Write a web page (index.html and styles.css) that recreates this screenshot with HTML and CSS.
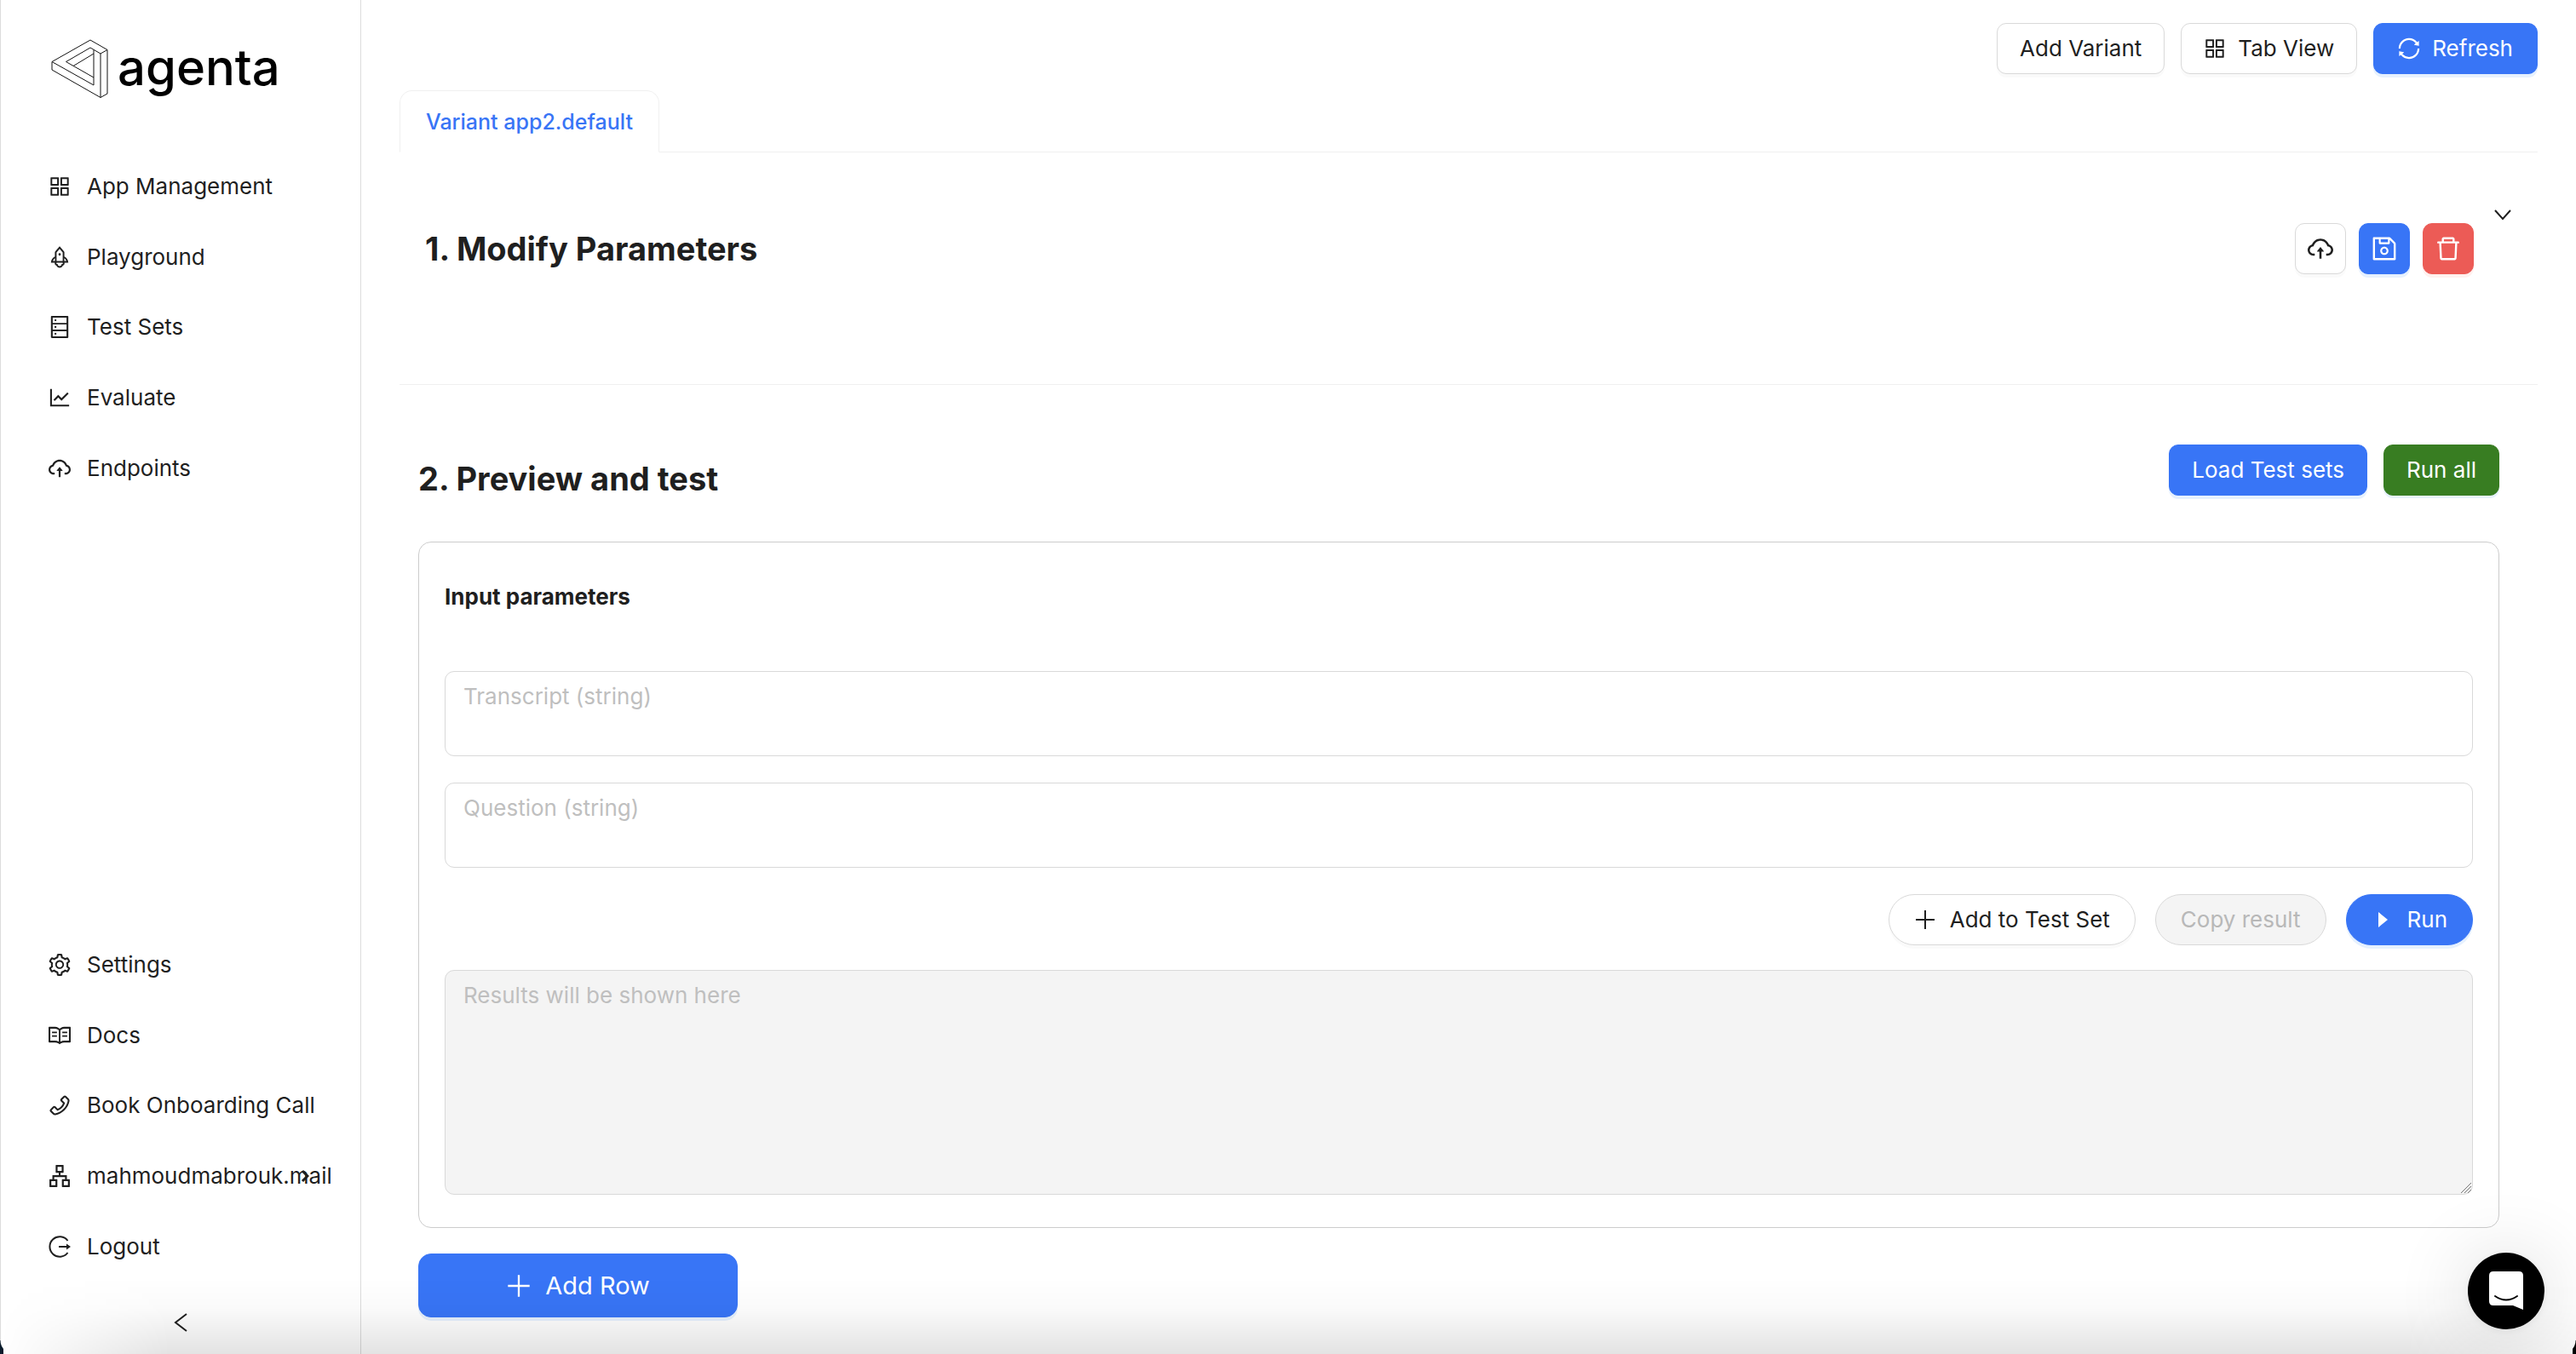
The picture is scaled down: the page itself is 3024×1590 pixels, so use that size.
FILE: index.html
```html
<!DOCTYPE html>
<html lang="en">
<head>
<meta charset="utf-8">
<title>Agenta Playground</title>
<link rel="stylesheet" href="styles.css">
</head>
<body>
<svg class="sprite" aria-hidden="true">
  <symbol id="appstore" viewBox="64 64 896 896"><path d="M464 144H160c-8.8 0-16 7.2-16 16v304c0 8.8 7.2 16 16 16h304c8.8 0 16-7.2 16-16V160c0-8.8-7.2-16-16-16zm-52 268H212V212h200v200zm452-268H560c-8.8 0-16 7.2-16 16v304c0 8.8 7.2 16 16 16h304c8.8 0 16-7.2 16-16V160c0-8.8-7.2-16-16-16zm-52 268H612V212h200v200zM464 544H160c-8.8 0-16 7.2-16 16v304c0 8.8 7.2 16 16 16h304c8.8 0 16-7.2 16-16V560c0-8.8-7.2-16-16-16zm-52 268H212V612h200v200zm452-268H560c-8.8 0-16 7.2-16 16v304c0 8.8 7.2 16 16 16h304c8.8 0 16-7.2 16-16V560c0-8.8-7.2-16-16-16zm-52 268H612V612h200v200z"/></symbol>
  <symbol id="rocket" viewBox="64 64 896 896"><path d="M864 736c0-111.6-65.4-208-160-252.9V317.3c0-15.1-5.3-29.7-15.1-41.2L536.5 95.4C530.1 87.8 521 84 512 84s-18.1 3.8-24.5 11.4L335.1 276.1a63.97 63.97 0 00-15.1 41.2v165.8C225.4 528 160 624.4 160 736h156.5c-2.3 7.2-3.5 15-3.5 23.8 0 22.1 7.6 43.7 21.4 60.8a97.2 97.2 0 0043.1 30.6c23.1 54 75.6 88.8 134.5 88.8 29.1 0 57.3-8.6 81.4-24.8 23.6-15.8 41.9-37.9 53-64a97 97 0 0043.1-30.5 97.52 97.52 0 0021.4-60.8c0-8.4-1.1-16.4-3.1-23.8H864zM762.3 621.4c9.4 14.6 17 30.3 22.5 46.6H700V558.7a211.6 211.6 0 0162.3 62.7zM388 483.1V318.8l124-147 124 147V668H388V483.1zM239.2 668c5.5-16.3 13.1-32 22.5-46.6 16.3-25.2 37.5-46.5 62.3-62.7V668h-84.8zm388.9 116.2c-5.2 3-11.2 4.2-17.1 3.4l-19.5-2.4-2.8 19.4c-5.4 37.9-38.4 66.5-76.7 66.5-38.3 0-71.3-28.6-76.7-66.5l-2.8-19.5-19.5 2.5a27.7 27.7 0 01-17.1-3.5c-8.7-5-14.1-14.3-14.1-24.4 0-10.6 5.9-19.4 14.6-23.8h231.3c8.8 4.5 14.6 13.3 14.6 23.8-.1 10.2-5.5 19.6-14.2 24.5zM464 400a48 48 0 1096 0 48 48 0 10-96 0z"/></symbol>
  <symbol id="database" viewBox="64 64 896 896"><path d="M832 64H192c-17.7 0-32 14.3-32 32v832c0 17.7 14.3 32 32 32h640c17.7 0 32-14.3 32-32V96c0-17.7-14.3-32-32-32zm-600 72h560v208H232V136zm560 480H232V408h560v208zm0 272H232V680h560v208zM304 240a40 40 0 1080 0 40 40 0 10-80 0zm0 272a40 40 0 1080 0 40 40 0 10-80 0zm0 272a40 40 0 1080 0 40 40 0 10-80 0z"/></symbol>
  <symbol id="chart" viewBox="64 64 896 896"><path d="M888 792H200V168c0-4.400-3.600-8-8-8h-56c-4.400 0-8 3.600-8 8v688c0 4.400 3.600 8 8 8h752c4.400 0 8-3.600 8-8v-56c0-4.400-3.600-8-8-8zM305.800 637.700c3.100 3.100 8.100 3.100 11.300 0l138.300-137.600L583 628.500c3.100 3.100 8.200 3.100 11.300 0l275.400-275.300c3.100-3.100 3.100-8.200 0-11.300l-39.600-39.600a8.030 8.030 0 00-11.300 0l-230 229.900L461.400 404a8.030 8.030 0 00-11.300 0L266.300 586.700a8.030 8.030 0 000 11.300l39.500 39.700z"/></symbol>
  <symbol id="cloud" viewBox="64 64 896 896"><path d="M518.3 459a8 8 0 00-12.600 0l-112 141.700a7.980 7.980 0 006.300 12.900h73.900V856c0 4.400 3.600 8 8 8h60c4.400 0 8-3.600 8-8V613.700H624c6.700 0 10.400-7.700 6.300-12.900L518.300 459z"/><path d="M811.4 366.7C765.6 245.9 648.9 160 512.2 160S258.8 245.8 213 366.6C127.3 389.1 64 467.2 64 560c0 110.5 89.5 200 199.9 200H304c4.4 0 8-3.6 8-8v-60c0-4.4-3.6-8-8-8h-40.1c-33.7 0-65.4-13.4-89-37.7-23.5-24.2-36-56.8-34.9-90.6.9-26.4 9.9-51.2 26.2-72.1 16.7-21.3 40.1-36.8 66.1-43.7l37.9-9.9 13.9-36.6c8.6-22.8 20.6-44.1 35.7-63.4a245.6 245.6 0 0152.4-49.9c41.1-28.9 89.5-44.2 140-44.2s98.9 15.3 140 44.2c19.9 14 37.5 30.8 52.4 49.9 15.1 19.3 27.1 40.7 35.700 63.400l13.800 36.500 37.800 10C846.100 454.500 884 503.800 884 560c0 33.100-12.900 64.300-36.300 87.700a123.070 123.070 0 01-87.600 36.300H720c-4.400 0-8 3.600-8 8v60c0 4.400 3.600 8 8 8h40.100C870.500 760 960 670.500 960 560c0-92.700-63.100-170.700-148.600-193.300z"/></symbol>
  <symbol id="setting" viewBox="64 64 896 896"><path d="M924.8 625.7l-65.5-56c3.1-19 4.7-38.4 4.7-57.8s-1.6-38.8-4.7-57.8l65.5-56a32.03 32.03 0 009.3-35.2l-.9-2.6a443.74 443.74 0 00-79.7-137.9l-1.8-2.1a32.12 32.12 0 00-35.1-9.5l-81.3 28.9c-30-24.6-63.5-44-99.7-57.6l-15.7-85a32.05 32.05 0 00-25.8-25.7l-2.7-.5c-52.1-9.4-106.9-9.4-159 0l-2.7.5a32.05 32.05 0 00-25.8 25.7l-15.8 85.4a351.86 351.86 0 00-99 57.4l-81.9-29.1a32 32 0 00-35.1 9.5l-1.8 2.1a446.02 446.02 0 00-79.7 137.9l-.9 2.6c-4.5 12.5-.8 26.5 9.3 35.2l66.3 56.6c-3.1 18.8-4.6 38-4.6 57.1 0 19.2 1.5 38.4 4.6 57.1L99 625.5a32.03 32.03 0 00-9.3 35.2l.9 2.6c18.1 50.4 44.9 96.9 79.7 137.9l1.8 2.1a32.12 32.12 0 0035.1 9.5l81.9-29.1c29.8 24.5 63.1 43.9 99 57.4l15.8 85.4a32.05 32.05 0 0025.8 25.7l2.7.5a449.4 449.4 0 00159 0l2.7-.5a32.05 32.05 0 0025.8-25.7l15.7-85a350 350 0 0099.7-57.6l81.3 28.9a32 32 0 0035.1-9.5l1.8-2.1c34.8-41.1 61.6-87.5 79.7-137.9l.9-2.6c4.5-12.3.8-26.3-9.3-35zM788.3 465.9c2.5 15.1 3.8 30.6 3.8 46.1s-1.3 31-3.8 46.1l-6.6 40.1 74.7 63.9a370.03 370.03 0 01-42.6 73.6L721 702.8l-31.4 25.8c-23.9 19.6-50.5 35-79.3 45.8l-38.1 14.3-17.9 97a377.5 377.5 0 01-85 0l-17.9-97.2-37.8-14.5c-28.5-10.8-55-26.2-78.7-45.7l-31.4-25.9-93.4 33.2c-17-22.9-31.2-47.6-42.6-73.6l75.5-64.5-6.5-40c-2.4-14.9-3.7-30.3-3.7-45.5 0-15.3 1.2-30.6 3.7-45.5l6.5-40-75.5-64.5c11.3-26.1 25.6-50.7 42.6-73.6l93.4 33.2 31.4-25.9c23.7-19.5 50.2-34.9 78.7-45.7l37.9-14.3 17.9-97.2c28.1-3.2 56.8-3.2 85 0l17.9 97 38.1 14.3c28.700 10.800 55.400 26.200 79.300 45.800l31.400 25.800 92.800-32.900c17 22.900 31.200 47.600 42.600 73.600L781.800 426l6.500 39.900zM512 326c-97.200 0-176 78.800-176 176s78.800 176 176 176 176-78.800 176-176-78.800-176-176-176zm79.200 255.200A111.600 111.600 0 01512 614c-29.900 0-58-11.700-79.200-32.800A111.600 111.600 0 01400 502c0-29.900 11.700-58 32.800-79.200C454 401.600 482.100 390 512 390c29.900 0 58 11.600 79.200 32.800A111.600 111.600 0 01624 502c0 29.900-11.700 58-32.800 79.200z"/></symbol>
  <symbol id="read" viewBox="64 64 896 896"><path d="M928 161H699.2c-49.1 0-97.1 14.1-138.4 40.7L512 233l-48.8-31.3A255.2 255.2 0 00324.8 161H96c-17.7 0-32 14.3-32 32v568c0 17.7 14.3 32 32 32h228.8c49.1 0 97.1 14.1 138.4 40.7l44.4 28.6c1.3.8 2.8 1.3 4.3 1.3s3-.4 4.3-1.3l44.4-28.6C602 807.1 650.1 793 699.2 793H928c17.700 0 32-14.300 32-32V193c0-17.700-14.300-32-32-32zM324.800 721H136V233h188.800c35.400 0 69.800 10.100 99.500 29.200l48.800 31.300 6.900 4.500v462c-47.600-25.600-100.800-39-155.200-39zm563.200 0H699.200c-54.400 0-107.600 13.400-155.200 39V298l6.900-4.500 48.800-31.300c29.700-19.100 64.100-29.200 99.500-29.200H888v488zM204 361h200v60H204zM620 361h200v60H620zM204 501h200v60H204zM620 501h200v60H620z"/></symbol>
  <symbol id="phone" viewBox="64 64 896 896"><path d="M877.1 238.7L770.6 132.3c-13-13-30.4-20.3-48.8-20.3s-35.8 7.2-48.8 20.3L558.3 246.8c-13 13-20.3 30.5-20.3 48.9 0 18.5 7.2 35.8 20.3 48.9l89.6 89.7a405.46 405.46 0 01-86.4 127.3c-36.7 36.9-79.6 66-127.2 86.6l-89.6-89.7c-13-13-30.4-20.3-48.8-20.3a68.2 68.2 0 00-48.8 20.3L132.3 673c-13 13-20.3 30.5-20.3 48.9 0 18.5 7.2 35.8 20.3 48.9l106.4 106.400c22.200 22.200 52.800 34.900 84.200 34.900 6.500 0 12.800-.5 19.200-1.600 132.400-21.800 263.800-92.300 369.900-198.300C818 606 888.400 474.600 910.400 342.100c6.300-37.600-6.300-76.300-33.300-103.400zm-37.600 91.500c-19.500 117.900-82.900 235.500-178.400 331s-213 158.900-330.900 178.400c-14.800 2.500-30-2.500-40.800-13.200L184.900 721.900 295.700 611l119.800 120 .9.9 21.600-8a481.290 481.290 0 00285.700-285.800l8-21.600-120.800-120.700 110.800-110.900 104.500 104.500c10.800 10.800 15.800 26 13.300 40.800z"/></symbol>
  <symbol id="apartment" viewBox="64 64 896 896"><path d="M908 640H804V488c0-4.400-3.600-8-8-8H548v-96h108c8.800 0 16-7.200 16-16V80c0-8.800-7.200-16-16-16H368c-8.800 0-16 7.200-16 16v288c0 8.800 7.200 16 16 16h108v96H228c-4.400 0-8 3.600-8 8v152H116c-8.800 0-16 7.200-16 16v288c0 8.800 7.200 16 16 16h288c8.800 0 16-7.200 16-16V656c0-8.800-7.200-16-16-16H292v-88h440v88H620c-8.800 0-16 7.200-16 16v288c0 8.800 7.200 16 16 16h288c8.800 0 16-7.200 16-16V656c0-8.800-7.200-16-16-16zm-564 76v168H176V716h168zm84-408V140h168v168H428zm420 576H680V716h168v168z"/></symbol>
  <symbol id="logout" viewBox="0 0 26 26"><path d="M22.500 6A11.700 11.700 0 1022.500 20" fill="none" stroke="currentColor" stroke-width="2"/><path d="M12 12h9V9.500l5 3.500-5 3.500V14h-9z"/></symbol>
  <symbol id="sync" viewBox="64 64 896 896"><path d="M168 504.2c1-43.7 10-86.1 26.900-126 17.300-41 42.100-77.700 73.700-109.400S337 212.300 378 195c42.400-17.900 87.400-27 133.900-27s91.500 9.100 133.800 27A341.500 341.500 0 01755 268.800c9.900 9.900 19.200 20.400 27.800 31.400l-60.200 47a8 8 0 003 14.100l175.700 43c5 1.200 9.900-2.600 9.900-7.700l.8-180.900c0-6.700-7.700-10.500-12.900-6.300l-56.400 44.100C765.800 155.100 646.200 92 511.800 92 282.700 92 96.300 275.600 92 503.800a8 8 0 008 8.200h60c4.400 0 7.900-3.500 8-7.800zm756 7.800h-60c-4.400 0-7.900 3.500-8 7.800-1 43.700-10 86.100-26.900 126-17.300 41-42.100 77.800-73.700 109.400A342.450 342.450 0 01512.100 856a342.240 342.240 0 01-243.200-100.800c-9.900-9.900-19.200-20.400-27.800-31.400l60.200-47a8 8 0 00-3-14.100l-175.700-43c-5-1.200-9.900 2.600-9.900 7.700l-.7 181c0 6.700 7.700 10.500 12.900 6.300l56.400-44.100C258.200 868.900 377.800 932 512.200 932c229.200 0 415.500-183.700 419.800-411.800a8 8 0 00-8-8.200z"/></symbol>
  <symbol id="save" viewBox="64 64 896 896"><path d="M893.3 293.3L730.7 130.7c-7.5-7.5-16.7-13-26.7-16V112H144c-17.7 0-32 14.3-32 32v736c0 17.7 14.3 32 32 32h736c17.7 0 32-14.3 32-32V338.5c0-17-6.700-33.200-18.700-45.200zM384 184h256v104H384V184zm456 656H184V184h136v136c0 17.700 14.300 32 32 32h320c17.700 0 32-14.300 32-32V205.800l136 136V840zM512 442c-79.500 0-144 64.500-144 144s64.500 144 144 144 144-64.500 144-144-64.500-144-144-144zm0 224c-44.200 0-80-35.800-80-80s35.800-80 80-80 80 35.800 80 80-35.800 80-80 80z"/></symbol>
  <symbol id="delete" viewBox="64 64 896 896"><path d="M360 184h304v72h72v-80c0-35.300-28.700-64-64-64H352c-35.300 0-64 28.700-64 64v80h72v-72zm504 72H160c-17.700 0-32 14.300-32 32v32c0 4.400 3.600 8 8 8h60.400l24.700 523c1.600 34.100 29.800 61 63.900 61h454c34.200 0 62.300-26.800 63.900-61l24.700-523H888c4.400 0 8-3.600 8-8v-32c0-17.700-14.300-32-32-32zM731.300 840H292.700l-24.200-512h487l-24.200 512z"/></symbol>
  <symbol id="plus" viewBox="0 0 26 26"><path d="M13 2v22M2 13h22" fill="none" stroke="currentColor" stroke-width="2"/></symbol>
  <symbol id="caret" viewBox="0 0 26 26"><path d="M8 4l11 9-11 9z"/></symbol>
</svg>

<div class="app">
  <aside class="sidebar">
    <a class="brand" href="#">
      <svg class="brand-mark" viewBox="0 0 68 70" aria-hidden="true"><path d="M46 1L66 12.500V64L58 68.500 1 36V26.500zM66 12.500L58 17V68.500M58 17L46 10 17.500 26.500 50 45M50 12.500V54L1 26.500M50 17L26 31.500"/></svg>
      <span class="brand-name">agenta</span>
    </a>
    <nav class="nav" aria-label="Main">
      <a href="#"><svg class="icon"><use href="#appstore"/></svg>App Management</a>
      <a href="#"><svg class="icon"><use href="#rocket"/></svg>Playground</a>
      <a href="#"><svg class="icon"><use href="#database"/></svg>Test Sets</a>
      <a href="#"><svg class="icon"><use href="#chart"/></svg>Evaluate</a>
      <a href="#"><svg class="icon"><use href="#cloud"/></svg>Endpoints</a>
    </nav>
    <nav class="nav nav-bottom" aria-label="Account">
      <a href="#"><svg class="icon"><use href="#setting"/></svg>Settings</a>
      <a href="#"><svg class="icon"><use href="#read"/></svg>Docs</a>
      <a href="#"><svg class="icon"><use href="#phone"/></svg>Book Onboarding Call</a>
      <a class="has-submenu" href="#"><svg class="icon"><use href="#apartment"/></svg>mahmoudmabrouk.mail<svg class="submenu-arrow" viewBox="0 0 10 18"><path d="M2 3l6 6-6 6"/></svg></a>
      <a href="#"><svg class="icon"><use href="#logout"/></svg>Logout</a>
    </nav>
    <button class="collapse" aria-label="Collapse sidebar"><svg class="line-icon" viewBox="0 0 26 26"><path d="M20 3L7 13l13 10"/></svg></button>
  </aside>

  <main class="main">
    <div class="toolbar">
      <button class="btn">Add Variant</button>
      <button class="btn"><svg class="icon"><use href="#appstore"/></svg>Tab View</button>
      <button class="btn primary"><svg class="icon"><use href="#sync"/></svg>Refresh</button>
    </div>
    <div class="tabs" role="tablist"><button class="tab" role="tab" aria-selected="true">Variant app2.default</button></div>

    <section class="modify">
      <h2>1. Modify Parameters</h2>
      <div class="actions">
        <button class="btn square" aria-label="Publish"><svg class="icon large"><use href="#cloud"/></svg></button>
        <button class="btn square primary" aria-label="Save"><svg class="icon large"><use href="#save"/></svg></button>
        <button class="btn square danger" aria-label="Delete"><svg class="icon large"><use href="#delete"/></svg></button>
      </div>
      <button class="expand" aria-label="Toggle parameters"><svg class="line-icon small" viewBox="0 0 22 22"><path d="M2 7l9 10 9-10"/></svg></button>
    </section>

    <section class="preview">
      <header class="preview-head">
        <h2>2. Preview and test</h2>
        <div class="preview-actions">
          <button class="btn primary">Load Test sets</button>
          <button class="btn success">Run all</button>
        </div>
      </header>
      <div class="card">
        <h3>Input parameters</h3>
        <textarea class="field" aria-label="Transcript" placeholder="Transcript (string)"></textarea>
        <textarea class="field" aria-label="Question" placeholder="Question (string)"></textarea>
        <div class="run-row">
          <button class="btn pill"><svg class="icon"><use href="#plus"/></svg>Add to Test Set</button>
          <button class="btn pill" disabled>Copy result</button>
          <button class="btn pill primary"><svg class="icon"><use href="#caret"/></svg>Run</button>
        </div>
        <div class="result-wrap">
          <textarea class="field result" aria-label="Result" placeholder="Results will be shown here" disabled></textarea>
          <svg class="grip" viewBox="0 0 14 14" aria-hidden="true"><path d="M1 13L13 1M5 13l8-8M9 13l4-4"/></svg>
        </div>
      </div>
      <button class="btn primary add-row"><svg class="icon large"><use href="#plus"/></svg>Add Row</button>
    </section>
  </main>
</div>
<div class="bottom-shade"></div>
<button class="chat" aria-label="Open chat"><svg viewBox="0 0 40 46" aria-hidden="true"><path d="M5 0h30q5 0 5 5v40l-12-5H5q-5 0-5-5V5q0-5 5-5z" fill="#fff"/><path d="M7 29q13 9 26 0" fill="none" stroke="#000" stroke-width="2" stroke-linecap="round"/></svg></button>
<div class="corner left"></div>
<div class="corner right"></div>
</body>
</html>
```
FILE: styles.css
```css
* { box-sizing: border-box; }

body {
  margin: 0;
  background: #fff;
  color: #1f1f1f;
  font: 26px/40px Inter, "Liberation Sans", sans-serif;
}

button, textarea { font: inherit; color: inherit; }
button { cursor: pointer; }
h2, h3 { margin: 0; }
h2 { font-size: 38px; line-height: 48px; font-weight: 700; }
h3 { font-size: 26px; line-height: 40px; font-weight: 700; }

.sprite { position: absolute; width: 0; height: 0; }
.icon { width: 26px; height: 26px; flex: none; fill: currentColor; }
.icon.large { width: 30px; height: 30px; }
.line-icon { width: 26px; height: 26px; fill: none; stroke: currentColor; stroke-width: 2; }
.line-icon.small { width: 22px; height: 22px; }

.app { display: flex; min-height: 100vh; }

/* Sidebar */
.sidebar {
  display: flex;
  flex-direction: column;
  flex: none;
  width: 424px;
  border-left: 1px solid #dcdcdc;
  border-right: 1px solid #dcdcdc;
}
.brand {
  display: flex;
  align-items: center;
  gap: 10px;
  height: 70px;
  margin: 46px 0 62px 59px;
  color: #000;
  text-decoration: none;
}
.brand-mark { width: 68px; height: 70px; fill: none; stroke: #111; stroke-width: 1; }
.brand-name { padding-bottom: 4px; font-size: 58px; line-height: 66px; font-weight: 500; }
.nav { display: grid; grid-auto-rows: 1fr; height: 413px; }
.nav a {
  display: flex;
  align-items: center;
  gap: 19px;
  padding-left: 56px;
  color: inherit;
  text-decoration: none;
  white-space: nowrap;
}
.nav-bottom { margin-top: auto; }
.has-submenu { position: relative; }
.submenu-arrow {
  position: absolute;
  left: 352px;
  width: 10px;
  height: 18px;
  fill: none;
  stroke: currentColor;
  stroke-width: 3;
}
.collapse {
  display: flex;
  align-items: center;
  justify-content: center;
  height: 75px;
  margin-top: 10px;
  padding: 0;
  border: 0;
  background: none;
}

/* Buttons */
.btn {
  display: inline-flex;
  align-items: center;
  justify-content: center;
  gap: 14px;
  height: 60px;
  padding: 0 26px;
  border: 1px solid #d9d9d9;
  border-radius: 11px;
  background: #fff;
  box-shadow: 0 4px 0 rgba(0, 0, 0, .02);
  white-space: nowrap;
}
.primary { background: #3875f6; border-color: #3875f6; color: #fff; box-shadow: 0 4px 0 #e6f1fe; }
.success { background: #387d22; border-color: #387d22; color: #fff; box-shadow: 0 3px 0 #e6f1fe; }
.danger { background: #ec5b56; border-color: #ec5b56; color: #fff; box-shadow: 0 4px 0 #fff1ef; }
.toolbar .primary { padding: 0 28px; }
.square { width: 60px; padding: 0; }
.pill { padding: 0 29px; gap: 16px; border-radius: 30px; }
.btn:disabled { background: #f4f4f4; color: #b8b8b8; box-shadow: none; }

/* Main column */
.main { flex: 1; min-width: 0; padding: 27px 45px 0; }
.toolbar { display: flex; justify-content: flex-end; gap: 19px; }
.tabs { display: flex; margin-top: 19px; border-bottom: 1px solid #f0f0f0; }
.tab {
  height: 73px;
  margin-bottom: -1px;
  padding: 0 30px;
  border: 1px solid #f0f0f0;
  border-bottom-color: #fff;
  border-radius: 15px 15px 0 0;
  background: #fff;
  color: #3875f6;
  font-size: 25px;
  font-weight: 500;
}
.modify {
  display: flex;
  align-items: flex-start;
  height: 273px;
  padding: 61px 30px 0;
  border-bottom: 1px solid #f0f0f0;
}
.modify h2 { padding-top: 28px; }
.actions { display: flex; gap: 15px; margin: 22px 23px 0 auto; }
.expand { display: flex; padding: 0; border: 0; background: none; }

.preview { padding: 70px 45px 0 22px; }
.preview-head { display: flex; justify-content: space-between; }
.preview-head h2 { padding-top: 16px; }
.preview-actions { display: flex; gap: 19px; }
.card {
  display: flex;
  flex-direction: column;
  margin: 50px 0 30px;
  padding: 44px 30px 38px;
  border: 1px solid #ccc;
  border-radius: 15px;
}
.card h3 { margin-bottom: 67px; }
.field {
  display: block;
  width: 100%;
  height: 100px;
  margin: 0 0 31px;
  padding: 9px 21px;
  border: 1px solid #d9d9d9;
  border-radius: 11px;
  background: #fff;
  resize: none;
}
.field::placeholder { color: #bfbfbf; opacity: 1; }
.run-row { display: flex; justify-content: flex-end; gap: 23px; margin-bottom: 29px; }
.result-wrap { position: relative; }
.result { height: 264px; margin: 0; background: #f4f4f4; }
.grip {
  position: absolute;
  right: 1px;
  bottom: 1px;
  width: 14px;
  height: 14px;
  fill: none;
  stroke: #777;
  stroke-width: 1;
}
.add-row { width: 375px; height: 75px; gap: 16px; border-radius: 15px; font-size: 29px; }

/* Layers pinned to the window */
.bottom-shade {
  position: fixed;
  inset: auto 0 0;
  height: 90px;
  background: linear-gradient(transparent, rgba(0, 0, 0, .02) 40%, rgba(0, 0, 0, .11));
  mask-image: linear-gradient(90deg, transparent, #000 200px, #000 calc(100% - 200px), rgba(0, 0, 0, .3));
  pointer-events: none;
}
.chat {
  position: fixed;
  right: 37px;
  bottom: 29px;
  display: flex;
  align-items: center;
  justify-content: center;
  width: 90px;
  height: 90px;
  padding: 0;
  border: 0;
  border-radius: 50%;
  background: #000;
  box-shadow: 0 2px 12px rgba(0, 0, 0, .06), 0 4px 90px rgba(0, 0, 0, .16);
}
.chat svg { width: 40px; height: 46px; }
.corner { position: fixed; bottom: 0; width: 4px; height: 16px; }
.corner.left { left: 0; background: radial-gradient(circle at 16px 0, transparent 15px, #0b1c2c 16px); }
.corner.right { right: 0; background: radial-gradient(circle at -12px 0, transparent 15px, #000 16px); }
```
